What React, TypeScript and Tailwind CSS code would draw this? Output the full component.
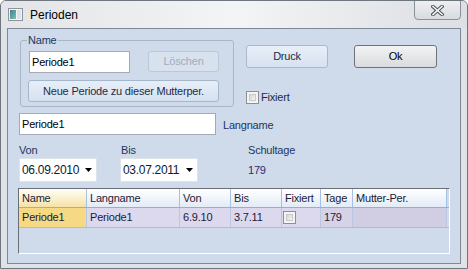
import React from 'react'

const ui = "font-['Liberation_Sans',Arial,sans-serif] text-[11px] tracking-[-0.2px]"

const columns = [
  { title: 'Name', width: 'w-[68px]' },
  { title: 'Langname', width: 'w-[93px]' },
  { title: 'Von', width: 'w-[51px]' },
  { title: 'Bis', width: 'w-[51px]' },
  { title: 'Fixiert', width: 'w-[39px]' },
  { title: 'Tage', width: 'w-[32px]' },
  { title: 'Mutter-Per.', width: 'w-[94px]' },
]

function WinIcon() {
  return (
    <svg width="15" height="13" viewBox="0 0 15 13">
      <defs>
        <linearGradient id="ic" x1="0" y1="0" x2="1" y2="1">
          <stop offset="0" stopColor="#3f7f9a" />
          <stop offset="1" stopColor="#7fc3a4" />
        </linearGradient>
      </defs>
      <rect x="0.5" y="0.5" width="14" height="12" fill="#f4f4f4" stroke="#8d9399" />
      <rect x="2" y="2" width="6" height="9" fill="url(#ic)" />
      <rect x="9" y="2" width="4" height="9" fill="#d9e3ea" />
    </svg>
  )
}

function CloseGlyph() {
  return (
    <svg width="13" height="11" viewBox="0 0 13 11">
      <path d="M2 1.5 L11 9.5 M11 1.5 L2 9.5" stroke="#4d535a" strokeWidth="3.6" strokeLinecap="square" />
      <path d="M2 1.5 L11 9.5 M11 1.5 L2 9.5" stroke="#f4f4f4" strokeWidth="1.6" strokeLinecap="square" />
    </svg>
  )
}

function Arrow() {
  return (
    <svg width="7" height="4" viewBox="0 0 7 4">
      <path d="M0 0 H7 L3.5 4 Z" fill="#000" />
    </svg>
  )
}

function Check() {
  return (
    <span className="block w-[13px] h-[13px] border border-[#8f8f8f] bg-[#f4f4f4] p-[2px]">
      <span className="block w-full h-full bg-gradient-to-br from-[#d5d5d5] to-[#f6f6f6] border border-[#c9c9c9]" />
    </span>
  )
}

function Button({ label, className }: { label: string; className: string }) {
  return (
    <div className={`flex items-center justify-center rounded-[3px] ${className}`}>
      {label}
    </div>
  )
}

function DatePicker({ value }: { value: string }) {
  return (
    <div className="flex items-center w-[78px] h-[24px] bg-white border border-[#dde3ea] pl-[2px] pr-[4px] text-[#0c1a33]">
      <span className="flex-1 text-[12px] tracking-[-0.3px]">{value}</span>
      <Arrow />
    </div>
  )
}

export default function App() {
  return (
    <div className={`w-[468px] h-[269px] flex flex-col bg-[#dfe2e6] border border-[#6e7680] rounded-t-[6px] overflow-hidden ${ui}`}>
      <div className="relative h-[27px] flex items-center pl-[7px] bg-gradient-to-r from-[#e2e4e7] via-[#f3f4f5] to-[#dcdfe3]">
        <WinIcon />
        <span className="ml-[7px] mt-[1px] text-[12px] tracking-normal text-black">Perioden</span>
        <div className="absolute right-[6px] top-[-1px] w-[47px] h-[20px] flex items-center justify-center rounded-b-[4px] border border-[#8a9098] bg-gradient-to-b from-[#eeeff1] to-[#d8dbdf]">
          <CloseGlyph />
        </div>
      </div>

      <div className="mx-[6px] h-[236px] border border-[#7f8995] bg-[#cfdbeb] text-[#1e3560]">
        <div className="flex pl-[12px] pt-[5px]">
          <fieldset className="w-[214px] h-[73px] border border-[#a8b6c8] rounded-[3px]">
            <legend className="ml-[6px] px-[1px] leading-[13px]">Name</legend>
            <div className="pl-[7px] pt-[4px] flex flex-col">
              <div className="flex">
                <div className="ml-px w-[101px] h-[22px] bg-white border border-[#a4abb4] flex items-center pl-[2px] text-black">
                  Periode1
                </div>
                <Button label="Löschen" className="ml-[18px] w-[71px] h-[21px] border border-[#bdc8d6] bg-[#d8e2ef] text-[#a1abb8]" />
              </div>
              <Button label="Neue Periode zu dieser Mutterper." className="mt-[7px] w-[191px] h-[22px] border border-[#a6b6ca] bg-gradient-to-b from-[#e7eef8] to-[#d6e1ef] text-[#1b2c48]" />
            </div>
          </fieldset>
          <div className="ml-[12px] pt-[11px] flex flex-col">
            <div className="flex">
              <Button label="Druck" className="w-[82px] h-[23px] border border-[#a9b8cb] bg-gradient-to-b from-[#e8eff8] to-[#d7e2f0] text-[#1b2c48]" />
              <Button label="Ok" className="ml-[26px] w-[83px] h-[23px] border border-[#6f7378] bg-gradient-to-b from-[#f3f3f3] to-[#d9dbde] text-black" />
            </div>
            <div className="mt-[21px] flex items-center">
              <Check />
              <span className="ml-[2px] text-[#1b2c48]">Fixiert</span>
            </div>
          </div>
        </div>

        <div className="flex items-center pl-[11px] mt-[6px]">
          <div className="w-[197px] h-[22px] bg-white border border-[#a4abb4] flex items-center pl-[2px] text-black">
            Periode1
          </div>
          <span className="ml-[7px] mt-[3px]">Langname</span>
        </div>

        <div className="flex pl-[11px] mt-[9px]">
          <div className="flex flex-col w-[78px]">
            <span className="leading-[13px]">Von</span>
            <div className="mt-[1px]">
              <DatePicker value="06.09.2010" />
            </div>
          </div>
          <div className="flex flex-col ml-[23px]">
            <span className="leading-[13px] pl-px">Bis</span>
            <div className="mt-[1px]">
              <DatePicker value="03.07.2011" />
            </div>
          </div>
          <div className="flex flex-col ml-[50px] pt-[0px]">
            <span className="leading-[13px]">Schultage</span>
            <span className="mt-[7px] leading-[13px] text-[#2b2a6e]">179</span>
          </div>
        </div>

        <div className="ml-[10px] mt-[6px] w-[432px] h-[66px] border-t border-l border-[#6a6f76] border-r border-b border-r-white border-b-white text-[#1e1a36]">
          <div className="flex h-[19px] border-b border-[#8cb0e0]">
            {columns.map((c, i) => (
              <div
                key={c.title}
                className={`${c.width} flex items-center pl-[3px] border-r border-[#a3c0e6] ${
                  i === 0
                    ? 'bg-gradient-to-b from-[#fffdf6] to-[#f6e2a6]'
                    : 'bg-gradient-to-b from-[#ffffff] to-[#e3ebf6]'
                }`}
              >
                {c.title}
              </div>
            ))}
          </div>
          <div className="flex h-[20px] border-b border-[#a9bde0]">
            <div className="w-[68px] flex items-center pl-[3px] bg-[#f6d985] border-r border-[#b9c7e2]">Periode1</div>
            <div className="w-[93px] flex items-center pl-[3px] bg-[#dcd9ef] border-r border-[#b9c7e2]">Periode1</div>
            <div className="w-[51px] flex items-center pl-[3px] bg-[#dcd9ef] border-r border-[#b9c7e2]">6.9.10</div>
            <div className="w-[51px] flex items-center pl-[3px] bg-[#dcd9ef] border-r border-[#b9c7e2]">3.7.11</div>
            <div className="w-[39px] flex items-center pl-[1px] bg-[#dcd9ef] border-r border-[#b9c7e2]">
              <Check />
            </div>
            <div className="w-[32px] flex items-center pl-[3px] bg-[#d6d3e9] border-r border-[#b9c7e2]">179</div>
            <div className="w-[94px] bg-[#d1cde3] border-r border-[#b9c7e2]" />
          </div>
        </div>
      </div>
    </div>
  )
}
